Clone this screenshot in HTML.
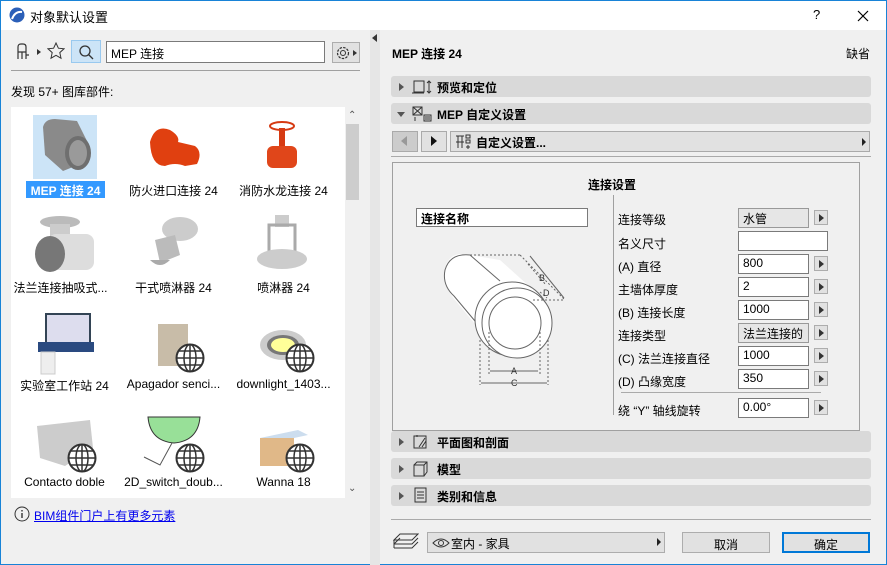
<!DOCTYPE html>
<html><head><meta charset="utf-8"><style>
*{margin:0;padding:0;box-sizing:border-box}
body{width:887px;height:565px;overflow:hidden;background:#f0f0f0;font-family:"Liberation Sans","Noto Sans CJK SC",sans-serif;font-size:12px;color:#000;position:relative}
.a{position:absolute}
.win{left:0;top:0;width:887px;height:565px;border:1px solid #1883d7}
.title{left:1px;top:1px;width:885px;height:29px;background:#fff}
.bar{background:#d9d9d9;border-radius:3px;height:21px;left:391px;width:480px;font-weight:bold;font-size:12px}
.bar .t{position:absolute;left:46px;top:3px}
.tri{position:absolute;left:8px;top:7px;width:0;height:0;border-left:5px solid #555;border-top:4px solid transparent;border-bottom:4px solid transparent}
.inp{background:#fff;border:1px solid #7a7a7a;height:20px;padding:1px 4px;font-size:12px}
.arr{width:14px;height:15px;background:#e1e1e1;border:1px solid #adadad}
.arr:after{content:"";position:absolute;left:4px;top:3px;border-left:5px solid #333;border-top:4px solid transparent;border-bottom:4px solid transparent}
.lbl{font-size:12px}
.it{font-size:12px;text-align:center;width:115px}
</style></head><body>
<svg width="0" height="0" style="position:absolute"><defs><symbol id="g" viewBox="0 0 30 30"><circle cx="15" cy="15" r="13.5" fill="#fff" stroke="#333" stroke-width="2"/><ellipse cx="15" cy="15" rx="6" ry="13.5" fill="none" stroke="#333" stroke-width="1.5"/><path d="M15 1.5v27M1.5 15h27M4 8h22M4 22h22" stroke="#333" stroke-width="1.5"/></symbol></defs></svg>
<div class="a win"></div>
<div class="a title"></div>
<svg class="a" style="left:9px;top:7px" width="16" height="16"><circle cx="8" cy="8" r="7.5" fill="#2b5fb8"/><path d="M3 12 Q6 4 13 5" stroke="#fff" stroke-width="2" fill="none"/></svg>
<div class="a" style="left:30px;top:7px;font-size:13px">对象默认设置</div>
<div class="a" style="left:813px;top:7px;font-size:13px">?</div>
<svg class="a" style="left:857px;top:10px" width="12" height="12"><path d="M1 1L11 11M11 1L1 11" stroke="#000" stroke-width="1.2"/></svg>

<svg class="a" style="left:16px;top:43px" width="26" height="18"><path d="M2 16V4q0-3 3-3h2q3 0 3 3v5H2M6 9v7M10 9v7M10 12h3" stroke="#333" fill="none" stroke-width="1.2"/><path d="M21 6l4 3-4 3z" fill="#333"/></svg>
<svg class="a" style="left:47px;top:42px" width="18" height="18"><path d="M9 1l2.4 5.2 5.6.6-4.2 3.8 1.2 5.6L9 13.3 4 16.2l1.2-5.6L1 6.8l5.6-.6z" fill="none" stroke="#333"/></svg>
<div class="a" style="left:71px;top:40px;width:30px;height:23px;background:#cce4f7;border:1px solid #99c9ef"></div>
<svg class="a" style="left:78px;top:44px" width="16" height="16"><circle cx="7" cy="7" r="5" fill="none" stroke="#333" stroke-width="1.3"/><path d="M10.5 10.5L15 15" stroke="#333" stroke-width="1.3"/></svg>
<div class="a inp" style="left:106px;top:41px;width:219px;height:22px;font-size:12px;padding-top:3px">MEP 连接</div>
<div class="a" style="left:332px;top:42px;width:28px;height:21px;background:#e1e1e1;border:1px solid #adadad"></div>
<svg class="a" style="left:334px;top:44px" width="24" height="18"><circle cx="9" cy="9" r="5.5" fill="none" stroke="#333" stroke-width="1.2" stroke-dasharray="2.5 1.2"/><circle cx="9" cy="9" r="2.5" fill="none" stroke="#333"/><path d="M19 6l4 3-4 3z" fill="#333"/></svg>
<div class="a" style="left:11px;top:70px;width:349px;height:1px;background:#a0a0a0"></div>
<div class="a" style="left:11px;top:83px">发现 57+ 图库部件:</div>
<div class="a" style="left:370px;top:30px;width:10px;height:535px;background:#e6e6e6"></div>
<div class="a" style="left:372px;top:34px;border-right:5px solid #333;border-top:4px solid transparent;border-bottom:4px solid transparent"></div>

<div class="a" style="left:11px;top:107px;width:334px;height:391px;background:#fff"></div>
<div class="a" style="left:345px;top:107px;width:15px;height:391px;background:#f0f0f0"></div>
<div class="a" style="left:346px;top:124px;width:13px;height:76px;background:#cdcdcd"></div>
<div class="a" style="left:348px;top:110px;font-size:10px;color:#555">&#8963;</div>
<div class="a" style="left:348px;top:483px;font-size:10px;color:#555">&#8964;</div>

<div class="a" style="left:33px;top:115px;width:64px;height:64px;background:#cce4f7"></div>
<svg class="a" style="left:33px;top:115px" width="64" height="64"><path d="M10 12 Q12 4 22 4 L44 6 L56 30 L55 46 L30 56 L12 40 Z" fill="#8a8a8a"/><ellipse cx="45" cy="38" rx="13" ry="17" fill="#6f6f6f"/><ellipse cx="45" cy="38" rx="9" ry="13" fill="#9a9a9a"/></svg>
<div class="a" style="left:26px;top:181px;width:79px;height:17px;background:#3399ff"></div>
<div class="a it" style="left:8px;top:182px;color:#fff;font-weight:bold">MEP 连接 24</div>
<svg class="a" style="left:145px;top:122px" width="60" height="50"><path d="M5 20 Q10 2 25 8 Q35 14 33 20 L50 24 Q58 30 52 42 L40 44 Q30 40 20 44 Q6 44 5 20Z" fill="#e04010"/></svg>
<div class="a it" style="left:116px;top:182px">防火进口连接 24</div>
<svg class="a" style="left:262px;top:118px" width="40" height="58"><ellipse cx="20" cy="8" rx="12" ry="4" fill="none" stroke="#d63a12" stroke-width="2"/><rect x="17" y="10" width="6" height="20" fill="#d63a12"/><rect x="5" y="28" width="30" height="22" rx="6" fill="#e0461a"/></svg>
<div class="a it" style="left:226px;top:182px">消防水龙连接 24</div>

<svg class="a" style="left:30px;top:212px" width="70" height="62"><ellipse cx="30" cy="10" rx="20" ry="6" fill="#bbb"/><rect x="20" y="12" width="20" height="14" fill="#ccc"/><rect x="18" y="22" width="46" height="36" rx="8" fill="#ddd"/><ellipse cx="20" cy="42" rx="15" ry="18" fill="#777"/></svg>
<div class="a it" style="left:3px;top:279px">法兰连接抽吸式...</div>
<svg class="a" style="left:145px;top:215px" width="60" height="55"><ellipse cx="35" cy="14" rx="18" ry="12" fill="#ccc"/><path d="M10 25 L30 20 L35 40 L15 48Z" fill="#bbb"/><path d="M5 45 Q15 55 25 45Z" fill="#aaa"/></svg>
<div class="a it" style="left:116px;top:279px">干式喷淋器 24</div>
<svg class="a" style="left:255px;top:213px" width="55" height="60"><rect x="20" y="2" width="14" height="12" fill="#ccc"/><rect x="14" y="12" width="26" height="28" fill="none" stroke="#aaa" stroke-width="3"/><ellipse cx="27" cy="46" rx="25" ry="10" fill="#ccc"/></svg>
<div class="a it" style="left:226px;top:279px">喷淋器 24</div>

<svg class="a" style="left:36px;top:312px" width="62" height="64"><rect x="10" y="2" width="44" height="30" fill="#dde" stroke="#345" stroke-width="2"/><rect x="2" y="30" width="56" height="10" fill="#2a4a80"/><rect x="5" y="40" width="14" height="22" fill="#eee" stroke="#ccc"/></svg>
<div class="a it" style="left:7px;top:377px">实验室工作站 24</div>
<svg class="a" style="left:155px;top:320px" width="40" height="50"><rect x="3" y="4" width="30" height="42" fill="#c8bca8"/></svg>
<svg class="a" style="left:175px;top:343px" width="30" height="30"><use href="#g"/></svg>
<div class="a it" style="left:116px;top:377px">Apagador senci...</div>
<svg class="a" style="left:258px;top:325px" width="50" height="40"><ellipse cx="25" cy="20" rx="23" ry="15" fill="#ccc"/><ellipse cx="25" cy="20" rx="16" ry="10" fill="#777"/><ellipse cx="25" cy="20" rx="12" ry="7" fill="#ffff99"/></svg>
<svg class="a" style="left:285px;top:343px" width="30" height="30"><use href="#g"/></svg>
<div class="a it" style="left:226px;top:377px">downlight_1403...</div>

<svg class="a" style="left:35px;top:418px" width="60" height="50"><path d="M2 8 L55 2 L58 30 L30 48 L5 40Z" fill="#ccc"/></svg>
<svg class="a" style="left:67px;top:443px" width="30" height="30"><use href="#g"/></svg>
<div class="a it" style="left:7px;top:475px">Contacto doble</div>
<svg class="a" style="left:140px;top:415px" width="65" height="55"><path d="M8 2 H60 Q58 26 34 28 Q10 26 8 2Z" fill="#98e098" stroke="#333"/><path d="M32 28 L20 50 L4 42" stroke="#555" fill="none"/></svg>
<svg class="a" style="left:175px;top:443px" width="30" height="30"><use href="#g"/></svg>
<div class="a it" style="left:116px;top:475px">2D_switch_doub...</div>
<svg class="a" style="left:258px;top:410px" width="52" height="58"><rect x="2" y="28" width="34" height="28" fill="#e0b888"/><path d="M2 28 L40 20 L50 25 L36 28Z" fill="#cde"/></svg>
<svg class="a" style="left:285px;top:443px" width="30" height="30"><use href="#g"/></svg>
<div class="a it" style="left:226px;top:475px">Wanna 18</div>

<svg class="a" style="left:14px;top:506px" width="16" height="16"><circle cx="8" cy="8" r="7" fill="none" stroke="#333"/><path d="M8 7v5M8 4v1.5" stroke="#333" stroke-width="1.4"/></svg>
<div class="a" style="left:34px;top:507px;color:#0000ee;text-decoration:underline">BIM组件门户上有更多元素</div>

<div class="a" style="left:392px;top:45px;font-weight:bold;font-size:12px">MEP 连接 24</div>
<div class="a" style="left:846px;top:45px">缺省</div>
<div class="a bar" style="top:76px"><div class="tri"></div><div class="t">预览和定位</div></div>
<svg class="a" style="left:412px;top:80px" width="20" height="15"><rect x="2" y="1" width="10" height="11" fill="none" stroke="#333"/><path d="M0 13h12M17 1v12M15 3l2-2 2 2M15 11l2 2 2-2" stroke="#333" fill="none"/></svg>
<div class="a bar" style="top:103px"><div class="tri" style="left:6px;top:9px;border-left:4px solid transparent;border-right:4px solid transparent;border-top:5px solid #555;border-bottom:0"></div><div class="t">MEP 自定义设置</div></div>
<svg class="a" style="left:412px;top:106px" width="20" height="16"><rect x="1" y="1" width="9" height="8" fill="none" stroke="#333"/><path d="M1 1l9 8M10 1l-9 8M12 9h7v6h-7zM13 11h5M13 13h5M2 12h2M2 14h2" stroke="#333" fill="none"/></svg>
<div class="a" style="left:392px;top:131px;width:26px;height:21px;background:#ccc;border:1px solid #aaa"></div>
<div class="a" style="left:401px;top:136px;border-right:6px solid #999;border-top:5px solid transparent;border-bottom:5px solid transparent"></div>
<div class="a" style="left:421px;top:131px;width:26px;height:21px;background:#e1e1e1;border:1px solid #aaa"></div>
<div class="a" style="left:431px;top:136px;border-left:6px solid #111;border-top:5px solid transparent;border-bottom:5px solid transparent"></div>
<div class="a" style="left:450px;top:131px;width:420px;height:21px;background:#e1e1e1;border:1px solid #aaa"></div>
<svg class="a" style="left:455px;top:134px" width="16" height="16"><path d="M1 2h8M3 2v12M7 2v12M1 8h8M11 1h4v3h-4zM11 6h4v3h-4zM11 13h4M13 11v4" stroke="#333" fill="none"/></svg>
<div class="a" style="left:476px;top:134px;font-weight:bold">自定义设置...</div>
<div class="a" style="left:862px;top:138px;border-left:4px solid #222;border-top:4px solid transparent;border-bottom:4px solid transparent"></div>
<div class="a" style="left:391px;top:156px;width:480px;height:1px;background:#aaa"></div>

<div class="a" style="left:392px;top:162px;width:468px;height:269px;border:1px solid #a0a0a0"></div>
<div class="a" style="left:588px;top:176px;font-weight:bold">连接设置</div>
<div class="a" style="left:613px;top:195px;width:1px;height:220px;background:#a0a0a0"></div>
<div class="a inp" style="left:416px;top:208px;width:172px;height:19px;font-weight:bold;padding-top:1px">连接名称</div>
<svg class="a" style="left:380px;top:160px" width="230" height="240">
<g fill="#fff" stroke="#666" stroke-width="1">
<path d="M90 95 Q70 90 65 108 Q62 125 75 140 L100 170 L150 127 L120 100 Z" stroke="none"/>
<path d="M90 95 Q70 93 65 110 Q62 125 74 136 L100 167" fill="none"/>
<path d="M90 95 L120 121" fill="none"/>
<path d="M90 95 H140" fill="none" stroke-dasharray="2 2"/>
<circle cx="132" cy="159" r="37"/>
<circle cx="137" cy="163" r="35"/>
<circle cx="135" cy="163" r="26"/>
<path d="M140 95 L185 140 M148 104 L166 125 M153 140 L185 140 M160 132 L167 138" fill="none" stroke-dasharray="2 2"/>
<path d="M150 96 L184 138" fill="none"/>
<path d="M109 172 V215 M160 172 V215 M100 180 V225 M168 180 V225" fill="none" stroke-dasharray="2 2"/>
<path d="M110 211 H158 M101 223 H167" fill="none"/>
</g>
<g font-size="9" font-family="Liberation Sans" fill="#333">
<text x="159" y="121">B</text><text x="163" y="136">D</text>
<text x="131" y="214">A</text><text x="131" y="226">C</text></g>
</svg>

<div class="a lbl" style="left:618px;top:211px">连接等级</div>
<div class="a inp" style="left:738px;top:208px;width:71px;background:#e6e6e6;border-color:#999">水管</div>
<div class="a arr" style="left:814px;top:210px"></div>
<div class="a lbl" style="left:618px;top:235px">名义尺寸</div>
<div class="a inp" style="left:738px;top:231px;width:90px"></div>
<div class="a lbl" style="left:618px;top:258px">(A) 直径</div>
<div class="a inp" style="left:738px;top:254px;width:71px">800</div>
<div class="a arr" style="left:814px;top:256px"></div>
<div class="a lbl" style="left:618px;top:281px">主墙体厚度</div>
<div class="a inp" style="left:738px;top:277px;width:71px">2</div>
<div class="a arr" style="left:814px;top:279px"></div>
<div class="a lbl" style="left:618px;top:304px">(B) 连接长度</div>
<div class="a inp" style="left:738px;top:300px;width:71px">1000</div>
<div class="a arr" style="left:814px;top:302px"></div>
<div class="a lbl" style="left:618px;top:327px">连接类型</div>
<div class="a inp" style="left:738px;top:323px;width:71px;background:#e6e6e6;border-color:#999;overflow:hidden;white-space:nowrap">法兰连接的</div>
<div class="a arr" style="left:814px;top:325px"></div>
<div class="a lbl" style="left:618px;top:350px">(C) 法兰连接直径</div>
<div class="a inp" style="left:738px;top:346px;width:71px">1000</div>
<div class="a arr" style="left:814px;top:348px"></div>
<div class="a lbl" style="left:618px;top:373px">(D) 凸缘宽度</div>
<div class="a inp" style="left:738px;top:369px;width:71px">350</div>
<div class="a arr" style="left:814px;top:371px"></div>
<div class="a" style="left:621px;top:392px;width:200px;height:1px;background:#aaa"></div>
<div class="a lbl" style="left:618px;top:402px">绕 “Y” 轴线旋转</div>
<div class="a inp" style="left:738px;top:398px;width:71px">0.00°</div>
<div class="a arr" style="left:814px;top:400px"></div>

<div class="a bar" style="top:431px"><div class="tri"></div><div class="t">平面图和剖面</div></div>
<svg class="a" style="left:413px;top:434px" width="16" height="16"><rect x="1" y="2" width="12" height="12" fill="none" stroke="#333"/><path d="M6 13L12 4M9 13L13 7M4 1v2" stroke="#333"/></svg>
<div class="a bar" style="top:458px"><div class="tri"></div><div class="t">模型</div></div>
<svg class="a" style="left:413px;top:461px" width="16" height="16"><path d="M1 4h10v11H1zM1 4l3-3h10v10l-3 4M11 4l3-3" fill="none" stroke="#333"/></svg>
<div class="a bar" style="top:485px"><div class="tri"></div><div class="t">类别和信息</div></div>
<svg class="a" style="left:414px;top:487px" width="14" height="16"><rect x="1" y="1" width="11" height="14" fill="none" stroke="#333"/><path d="M3 5h7M3 8h7M3 11h7" stroke="#333"/></svg>
<div class="a" style="left:391px;top:519px;width:480px;height:1px;background:#aaa"></div>

<svg class="a" style="left:393px;top:533px" width="26" height="18"><path d="M1 7l6-6h18l-6 6zM1 11l6-6M1 11h18l6-6M1 15h18l6-6M1 7v8" fill="none" stroke="#333"/></svg>
<div class="a" style="left:427px;top:532px;width:238px;height:21px;background:#e1e1e1;border:1px solid #adadad"></div>
<svg class="a" style="left:432px;top:537px" width="18" height="12"><path d="M1 6Q9-2 17 6Q9 14 1 6Z" fill="none" stroke="#333"/><circle cx="9" cy="6" r="2.5" fill="none" stroke="#333"/></svg>
<div class="a" style="left:451px;top:535px">室内 - 家具</div>
<div class="a" style="left:657px;top:538px;border-left:4px solid #222;border-top:4px solid transparent;border-bottom:4px solid transparent"></div>
<div class="a" style="left:682px;top:532px;width:88px;height:21px;background:#e1e1e1;border:1px solid #adadad;text-align:center;padding-top:3px">取消</div>
<div class="a" style="left:782px;top:532px;width:88px;height:21px;background:#e1e1e1;border:2px solid #0078d7;text-align:center;padding-top:2px">确定</div>
</body></html>
